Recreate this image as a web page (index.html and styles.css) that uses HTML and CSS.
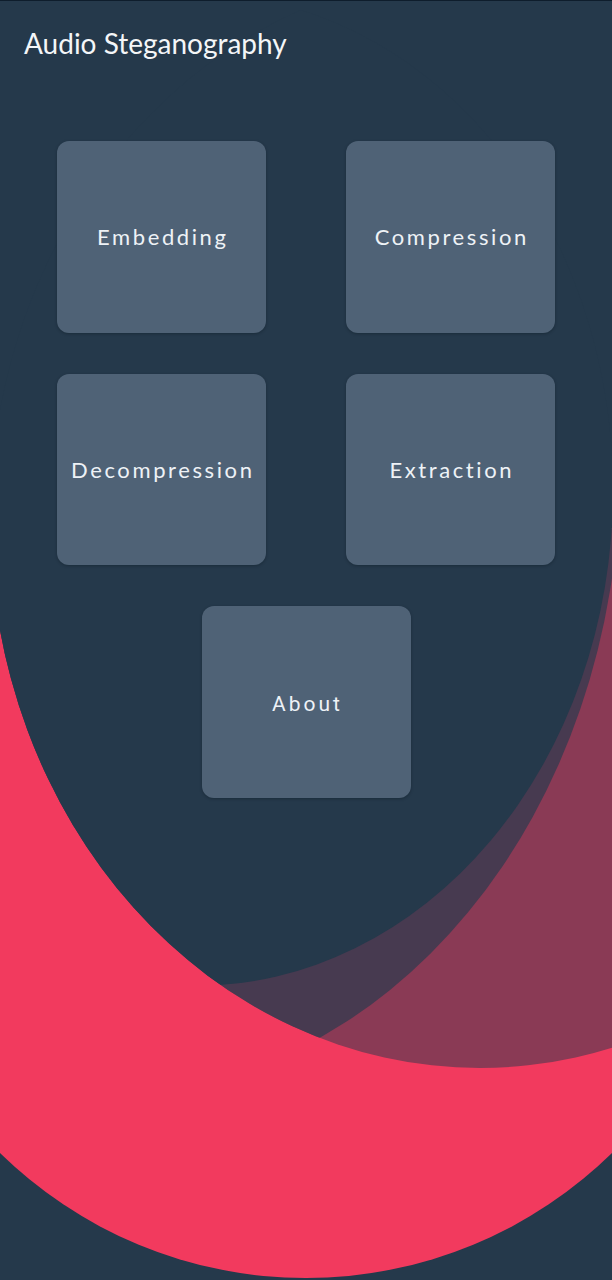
FILE: index.html
```html
<!DOCTYPE html>
<html lang="en">
<head>
<meta charset="utf-8">
<title>Audio Steganography</title>
<link rel="stylesheet" href="styles.css">
</head>
<body>
<div class="screen">
  <svg class="backdrop" viewBox="0 0 612 1280" width="612" height="1280" aria-hidden="true">
    <defs>
      <clipPath id="clip-pink"><circle cx="306" cy="841" r="437"/></clipPath>
      <clipPath id="clip-arc"><ellipse cx="480" cy="520" rx="490" ry="548"/></clipPath>
    </defs>
    <circle class="shape-pink" cx="306" cy="841" r="437"/>
    <g clip-path="url(#clip-arc)">
      <g clip-path="url(#clip-pink)">
        <rect class="shape-wine" x="0" y="0" width="612" height="1280"/>
        <ellipse class="shape-plum" cx="102" cy="468" rx="518" ry="628"/>
      </g>
      <ellipse class="shape-navy" cx="195" cy="490" rx="418" ry="496"/>
    </g>
  </svg>

  <header class="appbar">
    <h1 class="appbar-title">Audio Steganography</h1>
  </header>

  <main class="menu">
    <button class="tile" type="button"><span class="tile-label">Embedding</span></button>
    <button class="tile" type="button"><span class="tile-label">Compression</span></button>
    <button class="tile" type="button"><span class="tile-label">Decompression</span></button>
    <button class="tile" type="button"><span class="tile-label">Extraction</span></button>
    <button class="tile tile-wide" type="button"><span class="tile-label tile-label-roboto">About</span></button>
  </main>
</div>
</body>
</html>
```

FILE: styles.css
```css
html, body {
  margin: 0;
  padding: 0;
  background: #25394b;
}

.screen {
  position: relative;
  width: 612px;
  height: 1280px;
  overflow: hidden;
  background: #25394b;
  box-sizing: border-box;
  border-top: 1px solid #0e1d2c;
  font-family: "Lato", "Open Sans", sans-serif;
}

.backdrop {
  position: absolute;
  top: -1px;
  left: 0;
  display: block;
}

.shape-pink { fill: #f23a5e; }
.shape-wine { fill: #8a3a55; }
.shape-plum { fill: #473a50; }
.shape-navy { fill: #25394b; }

.appbar {
  position: relative;
  padding: 26px 24px 0;
}

.appbar-title {
  margin: 0;
  font-family: "Lato", "Open Sans", sans-serif;
  font-weight: 400;
  font-size: 28px;
  line-height: 32px;
  letter-spacing: 0;
  color: #f4f6f8;
}

.menu {
  position: relative;
  display: grid;
  grid-template-columns: 209px 209px;
  column-gap: 80px;
  row-gap: 41px;
  justify-content: center;
  margin-top: 82px;
}

.tile {
  display: flex;
  align-items: center;
  justify-content: center;
  width: 209px;
  height: 191.5px;
  padding: 1px 0 0;
  border: none;
  border-radius: 12px;
  background: #4f6276;
  box-shadow: 0 1px 3px rgba(10, 20, 30, 0.35);
  cursor: pointer;
}

.tile-wide {
  grid-column: 1 / span 2;
  justify-self: center;
}

.tile-label {
  font-family: "Lato", "Open Sans", sans-serif;
  font-size: 22px;
  line-height: 26px;
  letter-spacing: 2.6px;
  color: #eef2f6;
  padding-left: 2.6px;
}

.tile-label-roboto {
  font-family: "Roboto", "Lato", sans-serif;
  font-size: 21px;
  letter-spacing: 3px;
  padding-left: 3px;
  padding-top: 3px;
}
```
